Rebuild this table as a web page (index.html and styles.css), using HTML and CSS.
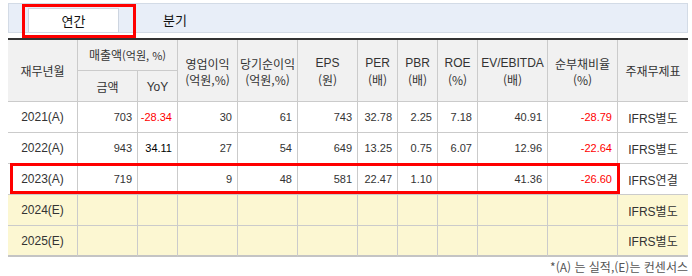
FILE: index.html
```html
<!DOCTYPE html>
<html lang="ko">
<head>
<meta charset="utf-8">
<link rel="stylesheet" href="styles.css">
</head>
<body>
<div class="page">
  <div class="tabbar">
    <div class="tab active">연간</div>
    <div class="tab">분기</div>
  </div>
  <table class="fin">
    <colgroup>
      <col style="width:70px"><col style="width:60px"><col style="width:40px"><col style="width:60px">
      <col style="width:60px"><col style="width:60px"><col style="width:40px"><col style="width:40px">
      <col style="width:40px"><col style="width:70px"><col style="width:70px"><col style="width:70px">
    </colgroup>
    <thead>
      <tr>
        <th rowspan="2">재무년월</th>
        <th colspan="2">매출액<span class="unit">(억원, %)</span></th>
        <th rowspan="2"><span class="l1">영업이익</span><span class="l2">(억원,%)</span></th>
        <th rowspan="2"><span class="l1">당기순이익</span><span class="l2">(억원,%)</span></th>
        <th rowspan="2"><span class="l1 lat">EPS</span><span class="l2">(원)</span></th>
        <th rowspan="2"><span class="l1 lat">PER</span><span class="l2">(배)</span></th>
        <th rowspan="2"><span class="l1 lat">PBR</span><span class="l2">(배)</span></th>
        <th rowspan="2"><span class="l1 lat">ROE</span><span class="l2">(%)</span></th>
        <th rowspan="2"><span class="l1 lat">EV/EBITDA</span><span class="l2">(배)</span></th>
        <th rowspan="2"><span class="l1">순부채비율</span><span class="l2">(%)</span></th>
        <th rowspan="2" class="last">주재무제표</th>
      </tr>
      <tr>
        <th>금액</th>
        <th><span class="lat">YoY</span></th>
      </tr>
    </thead>
    <tbody>
      <tr>
        <td class="yr">2021(A)</td><td>703</td><td class="neg">-28.34</td><td>30</td><td>61</td><td>743</td><td>32.78</td><td>2.25</td><td>7.18</td><td>40.91</td><td class="neg">-28.79</td><td class="std last">IFRS별도</td>
      </tr>
      <tr>
        <td class="yr">2022(A)</td><td>943</td><td class="pos">34.11</td><td>27</td><td>54</td><td>649</td><td>13.25</td><td>0.75</td><td>6.07</td><td>12.96</td><td class="neg">-22.64</td><td class="std last">IFRS별도</td>
      </tr>
      <tr>
        <td class="yr">2023(A)</td><td>719</td><td></td><td>9</td><td>48</td><td>581</td><td>22.47</td><td>1.10</td><td></td><td>41.36</td><td class="neg">-26.60</td><td class="std last">IFRS연결</td>
      </tr>
      <tr class="est">
        <td class="yr">2024(E)</td><td></td><td></td><td></td><td></td><td></td><td></td><td></td><td></td><td></td><td></td><td class="std last">IFRS별도</td>
      </tr>
      <tr class="est lastrow">
        <td class="yr">2025(E)</td><td></td><td></td><td></td><td></td><td></td><td></td><td></td><td></td><td></td><td></td><td class="std last">IFRS별도</td>
      </tr>
    </tbody>
  </table>
  <p class="note">*(A) 는 실적,(E)는 컨센서스</p>
  <div class="mark mark-tab"></div>
  <div class="mark mark-row"></div>
</div>
</body>
</html>
```

FILE: styles.css
```css
* { box-sizing: border-box; }
html, body { margin: 0; background: #fff; }
body {
  padding: 3px 0 0 8px;
  font-family: "Liberation Sans", "Noto Sans CJK KR", sans-serif;
  color: #333;
}
.page {
  position: relative;
  width: 680px;
}
.tabbar {
  display: flex;
  align-items: flex-end;
  height: 30px;
  padding-left: 19px;
  background: #e8eef8;
  border: 1px solid #d3dbe6;
}
.tab {
  height: 24px;
  line-height: 23px;
  text-align: center;
  font-family: "Noto Sans CJK KR", sans-serif;
  font-size: 13px;
  color: #111;
}
.tab.active {
  width: 91px;
  background: #fff;
  border: 1px solid #cdd5e0;
  border-bottom: none;
}
.tab:not(.active) { width: 112px; }

.fin {
  margin-top: 5px;
  width: 680px;
  table-layout: fixed;
  border-collapse: separate;
  border-spacing: 0;
  border-top: 2px solid #333;
}
.fin th, .fin td {
  height: 31px;
  padding: 0;
  border-right: 1px solid #cbcbcb;
  border-bottom: 1px solid #cbcbcb;
}
.fin .last { border-right: none; }
.fin th {
  background: #f1f1f1;
  font-family: "Noto Sans CJK KR", sans-serif;
  font-weight: normal;
  font-size: 12px;
  line-height: 15px;
  color: #333;
  text-align: center;
}
.fin th .l1, .fin th .l2 { display: block; }
.fin th .l1 { margin: 1px 0 1px; }
.fin th .unit { font-size: 11px; }
.fin th .lat { font-family: "Liberation Sans", sans-serif; font-size: 12px; }
.fin td {
  font-size: 11px;
  text-align: right;
  padding-right: 5px;
  color: #333;
}
.fin td.yr {
  text-align: center;
  padding-right: 0;
  font-size: 12px;
}
.fin td.std {
  text-align: center;
  padding-right: 0;
  font-size: 12px;
}
.fin td.neg { color: #f00; }
.fin td.pos { color: #000; }
.fin tr.est td { background: #fcf7d2; }
.fin tr.lastrow td { border-bottom: 2px solid #c4c4c4; }

.note {
  margin: 3px 0 0;
  text-align: right;
  font-family: "Noto Sans CJK KR", sans-serif;
  font-size: 12px;
  line-height: 14px;
  color: #555;
}
.mark {
  position: absolute;
  border: 3px solid #f00;
  pointer-events: none;
}
.mark-tab { left: 14px; top: 1px; width: 114px; height: 34px; }
.mark-row { left: 2px; top: 160px; width: 610px; height: 31px; }
```
